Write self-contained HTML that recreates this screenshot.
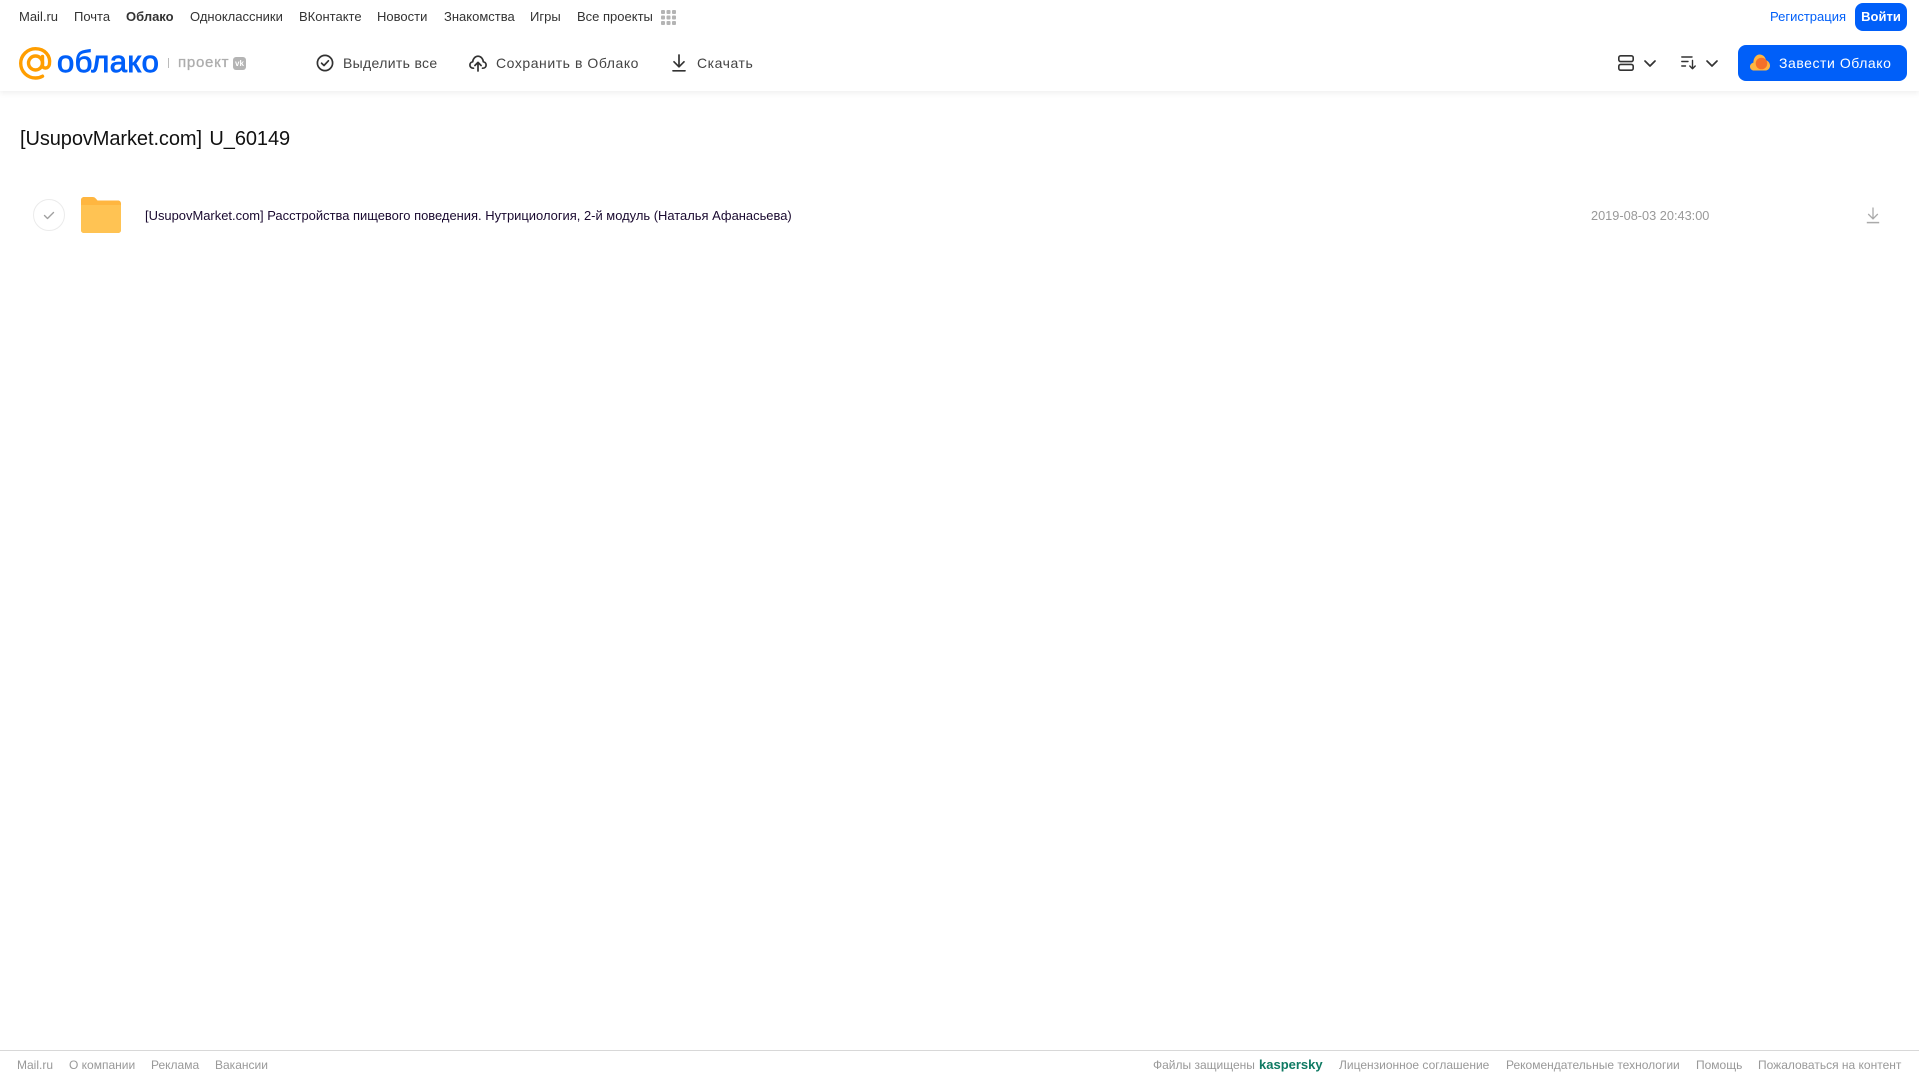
<!DOCTYPE html>
<html lang="ru">
<head>
<meta charset="utf-8">
<title>Облако</title>
<style>
html,body{margin:0;padding:0;background:#fff;}
body{width:1919px;height:1079px;position:relative;overflow:hidden;font-family:"Liberation Sans",sans-serif;}
.t{position:absolute;white-space:nowrap;line-height:20px;height:20px;}
.n{top:7px;font-size:13px;color:#333;}
.b{top:53px;font-size:14px;color:#444;letter-spacing:.55px;}
.f{top:1055px;font-size:12px;color:#999;}
svg{position:absolute;overflow:visible;}
</style>
</head>
<body>
<div style="position:absolute;left:0;top:0;width:1919px;height:91px;background:#fff;box-shadow:0 2px 6px rgba(0,0,0,.07);"></div>

<span class="t n" style="left:19px">Mail.ru</span>
<span class="t n" style="left:74px">Почта</span>
<span class="t n" style="left:126px;font-weight:bold">Облако</span>
<span class="t n" style="left:190px">Одноклассники</span>
<span class="t n" style="left:299px">ВКонтакте</span>
<span class="t n" style="left:377px">Новости</span>
<span class="t n" style="left:444px">Знакомства</span>
<span class="t n" style="left:530px">Игры</span>
<span class="t n" style="left:577px">Все проекты</span>
<svg style="left:661px;top:10px" width="15" height="15" viewBox="0 0 15 15" fill="#b4b4b4">
<rect x="0" y="0" width="4" height="4" rx="1"/><rect x="5.5" y="0" width="4" height="4" rx="1"/><rect x="11" y="0" width="4" height="4" rx="1"/>
<rect x="0" y="5.5" width="4" height="4" rx="1"/><rect x="5.5" y="5.5" width="4" height="4" rx="1"/><rect x="11" y="5.5" width="4" height="4" rx="1"/>
<rect x="0" y="11" width="4" height="4" rx="1"/><rect x="5.5" y="11" width="4" height="4" rx="1"/><rect x="11" y="11" width="4" height="4" rx="1"/>
</svg>

<span class="t n" style="left:1770px;color:#005ff9">Регистрация</span>
<div style="position:absolute;left:1855px;top:3px;width:52px;height:28px;border-radius:8px;background:#005ff9;color:#fff;font-size:13px;font-weight:bold;line-height:28px;text-align:center;">Войти</div>

<!-- logo -->
<svg style="left:19px;top:47px" width="33" height="33" viewBox="0 0 33 33" fill="none">
<circle cx="16.5" cy="16" r="7" stroke="#ff9e00" stroke-width="3.4"/>
<path d="M23.5 9.5V18.5C23.5 22 29.6 22 30.4 17.5C32 8.5 25.5 1.7 16.5 1.7C8.5 1.7 1.7 8.3 1.7 16.3C1.7 24.8 8.5 31 16.5 31C19.5 31 21.5 30.3 23.5 29.2" stroke="#ff9e00" stroke-width="3.4" stroke-linecap="round"/>
</svg>
<span class="t" style="left:57px;top:45px;height:34px;line-height:34px;font-size:31px;color:#005ff9;-webkit-text-stroke:.9px #005ff9;letter-spacing:.35px;">облако</span>
<div style="position:absolute;left:168px;top:58px;width:1px;height:10px;background:#bbb;"></div>
<span class="t" style="left:178px;top:53px;font-size:15px;color:#adadad;-webkit-text-stroke:.3px #adadad;letter-spacing:.75px;">проект</span>
<div style="position:absolute;left:233px;top:57px;width:13px;height:13px;border-radius:3px;background:#b4b4b4;color:#fff;font-size:8px;font-weight:bold;line-height:13px;text-align:center;">vk</div>

<!-- toolbar -->
<svg style="left:316px;top:54px" width="18" height="18" viewBox="0 0 18 18" fill="none" stroke="#333" stroke-width="1.7" stroke-linecap="round" stroke-linejoin="round">
<circle cx="9" cy="9" r="7.6"/><path d="M5.6 9.2L8 11.5L12.4 6.8"/>
</svg>
<span class="t b" style="left:343px;letter-spacing:.33px">Выделить все</span>

<svg style="left:469px;top:54px" width="18" height="18" viewBox="0 0 18 18" fill="none" stroke="#333" stroke-width="1.7" stroke-linecap="round" stroke-linejoin="round">
<path d="M4.5 14.2H4C2 14.2 .9 12.7 .9 11C.9 9.3 2.2 8 3.7 7.8C4 4.6 6.3 2.2 9 2.2C11.8 2.2 14 4.6 14.3 7.8C15.9 8 17.1 9.3 17.1 11C17.1 12.7 16 14.2 14 14.2H13.5"/>
<path d="M9 17V8.6M5.9 11.5L9 8.4L12.1 11.5"/>
</svg>
<span class="t b" style="left:496px">Сохранить в Облако</span>

<svg style="left:672px;top:54px" width="14" height="18" viewBox="0 0 14 18" fill="none" stroke="#333" stroke-width="1.7" stroke-linecap="round" stroke-linejoin="round">
<path d="M7 1V12.5M2 7.8L7 12.8L12 7.8"/><path d="M1 16.8H13"/>
</svg>
<span class="t b" style="left:697px">Скачать</span>

<!-- right controls -->
<svg style="left:1618px;top:55px" width="16" height="16" viewBox="0 0 16 16" fill="none" stroke="#333" stroke-width="1.6">
<rect x=".8" y=".8" width="14.4" height="5.8" rx="1.8"/><rect x=".8" y="9.4" width="14.4" height="5.8" rx="1.8"/>
</svg>
<svg style="left:1644px;top:60px" width="12" height="7" viewBox="0 0 12 7" fill="none" stroke="#333" stroke-width="1.7" stroke-linecap="round" stroke-linejoin="round"><path d="M1 1L6 6L11 1"/></svg>
<svg style="left:1681px;top:56px" width="16" height="14" viewBox="0 0 16 14" fill="none" stroke="#333" stroke-width="1.4" stroke-linecap="round" stroke-linejoin="round">
<path d="M.8 1H11M.8 5.5H7M.8 10H4.5"/><path d="M11.5 4.5V12.5M8.8 10L11.5 12.7L14.2 10"/>
</svg>
<svg style="left:1706px;top:60px" width="12" height="7" viewBox="0 0 12 7" fill="none" stroke="#333" stroke-width="1.7" stroke-linecap="round" stroke-linejoin="round"><path d="M1 1L6 6L11 1"/></svg>

<div style="position:absolute;left:1738px;top:45px;width:169px;height:36px;border-radius:8px;background:#005ff9;"></div>
<svg style="left:1750px;top:54px" width="20" height="17" viewBox="0 0 20 17">
<path d="M4 16.5C1.8 16.5 0 14.8 0 12.6C0 10.6 1.4 9 3.3 8.7C3.6 4 6 .5 9.6 .5C13 .5 15.4 3 16 6.3C18.3 7 20 9.2 20 11.7C20 14.5 17.8 16.5 15 16.5Z" fill="#ffb540"/>
<circle cx="11.5" cy="9.5" r="5.8" fill="#f4702a"/>
</svg>
<span class="t" style="left:1779px;top:53px;font-size:14px;color:#fff;letter-spacing:.55px;">Завести Облако</span>

<!-- title -->
<div class="t" style="left:20px;top:125px;height:28px;line-height:28px;font-size:20px;color:#111;word-spacing:2px;letter-spacing:-.08px;">[UsupovMarket.com] U_60149</div>

<!-- row -->
<div style="position:absolute;left:33px;top:199px;width:30px;height:30px;border:1px solid #ebebeb;border-radius:50%;"></div>
<svg style="left:43px;top:211px" width="12" height="9" viewBox="0 0 12 9" fill="none" stroke="#a0a0a0" stroke-width="1.4" stroke-linecap="round" stroke-linejoin="round"><path d="M1.5 4.5L4.5 7.5L10.5 1.5"/></svg>

<svg style="left:81px;top:197px" width="40" height="36" viewBox="0 0 40 36">
<path d="M0 3C0 1.2 1.2 0 3 0H11.5C13 0 14 .6 15 1.7L16.5 3.5H37C38.8 3.5 40 4.8 40 6.5V33C40 34.8 38.8 36 37 36H3C1.2 36 0 34.8 0 33Z" fill="#ffb640"/>
<path d="M0 9C0 7.5 1 8 3 8H37C39 8 40 7.5 40 9V33C40 34.8 38.8 36 37 36H3C1.2 36 0 34.8 0 33Z" fill="#ffc353"/>
</svg>

<span class="t" style="left:145px;top:206px;font-size:12.95px;color:#1a0a30;">[UsupovMarket.com] Расстройства пищевого поведения. Нутрициология, 2-й модуль (Наталья Афанасьева)</span>
<span class="t" style="left:1591px;top:206px;font-size:12.75px;color:#999;">2019-08-03 20:43:00</span>
<svg style="left:1866px;top:207px" width="14" height="17" viewBox="0 0 14 17" fill="none" stroke="#aaa" stroke-width="1.3">
<path d="M7 .5V11.5M2.2 7L7 11.8L11.8 7"/><path d="M.8 15.6H13.2" stroke-width="1.5"/>
</svg>

<!-- footer -->
<div style="position:absolute;left:0;top:1050px;width:1919px;height:1px;background:#d8d8d8;"></div>
<span class="t f" style="left:17px">Mail.ru</span>
<span class="t f" style="left:69px">О компании</span>
<span class="t f" style="left:151px">Реклама</span>
<span class="t f" style="left:215px">Вакансии</span>
<span class="t f" style="left:1153px">Файлы защищены</span>
<span class="t f" style="left:1259px;font-size:13px;font-weight:bold;color:#0f7a63;">kaspersky</span>
<span class="t f" style="left:1339px">Лицензионное соглашение</span>
<span class="t f" style="left:1506px">Рекомендательные технологии</span>
<span class="t f" style="left:1696px">Помощь</span>
<span class="t f" style="left:1758px">Пожаловаться на контент</span>
</body>
</html>
